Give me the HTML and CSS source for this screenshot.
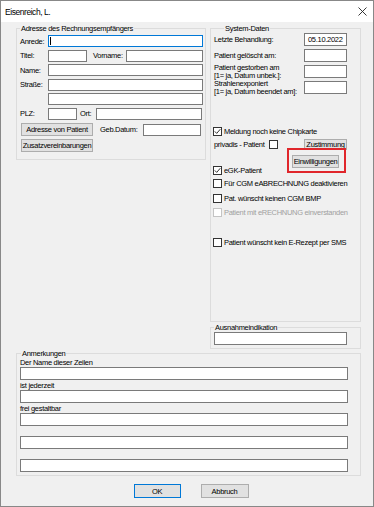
FILE: index.html
```html
<!DOCTYPE html>
<html lang="de">
<head>
  <meta charset="UTF-8" />
  <title>Eisenreich, L.</title>
  <link rel="stylesheet" href="styles.css">
</head>
<body>
<div class="window">
  <div class="titlebar">
    <span class="title">Eisenreich, L.</span>
    <svg class="close" width="9" height="9" viewBox="0 0 9 9"><path d="M0.5 0.5 L8.5 8.5 M8.5 0.5 L0.5 8.5" stroke="#222" stroke-width="0.9" fill="none"/></svg>
  </div>

  <div class="client">
    <div class="top">
      <fieldset class="group addr">
        <legend>Adresse des Rechnungsempfängers</legend>
        <div class="addr-rows">
          <div class="row"><span class="lbl">Anrede:</span><div class="edit focus"><span class="caret"></span></div></div>
          <div class="row"><span class="lbl">Titel:</span><div class="edit titel"></div><span class="lbl vorname">Vorname:</span><div class="edit"></div></div>
          <div class="row"><span class="lbl">Name:</span><div class="edit"></div></div>
          <div class="row"><span class="lbl">Straße:</span><div class="edit"></div></div>
          <div class="row"><span class="lbl"></span><div class="edit"></div></div>
          <div class="row"><span class="lbl">PLZ:</span><div class="edit plz"></div><span class="lbl ort">Ort:</span><div class="edit ort-edit"></div></div>
          <div class="row btn-row"><button class="btn wide">Adresse von Patient</button><span class="lbl geb">Geb.Datum:</span><div class="edit geb-edit"></div></div>
          <div class="row btn-row"><button class="btn wide">Zusatzvereinbarungen</button></div>
        </div>
      </fieldset>

      <div class="rightcol">
        <fieldset class="group sys">
          <legend>System-Daten</legend>
          <div class="sys-grid">
            <span class="lbl">Letzte Behandlung:</span><div class="edit value">05.10.2022</div>
            <span class="lbl">Patient gelöscht am:</span><div class="edit"></div>
            <span class="lbl">Patient gestorben am<br>[1= ja, Datum unbek.]:</span><div class="edit"></div>
            <span class="lbl">Strahlenexponiert<br>[1= ja, Datum beendet am]:</span><div class="edit"></div>
          </div>

          <div class="check meldung"><span class="box checked"><svg width="7" height="7" viewBox="0 0 7 7"><path d="M0.8 3.4 L2.7 5.4 L6.3 1.2" stroke="#333" stroke-width="1" fill="none"/></svg></span>Meldung noch keine Chipkarte</div>

          <div class="privadis">
            <span class="privadis-text">privadis - Patient</span>
            <span class="box"></span>
            <button class="btn small">Zustimmung</button>
          </div>

          <div class="egk-row">
            <div class="check"><span class="box checked"><svg width="7" height="7" viewBox="0 0 7 7"><path d="M0.8 3.4 L2.7 5.4 L6.3 1.2" stroke="#333" stroke-width="1" fill="none"/></svg></span>eGK-Patient</div>
            <div class="highlight"><button class="btn small">Einwilligungen</button></div>
          </div>

          <div class="check cgm">
            <span class="box"></span>Für CGM eABRECHNUNG deaktivieren
          </div>
          <div class="check bmp">
            <span class="box"></span>Pat. wünscht keinen CGM BMP
          </div>
          <div class="check disabled erechnung">
            <span class="box"></span>Patient mit eRECHNUNG einverstanden
          </div>
          <div class="check sms">
            <span class="box"></span>Patient wünscht kein E-Rezept per SMS
          </div>
        </fieldset>

        <fieldset class="group ausnahme">
          <legend>Ausnahmeindikation</legend>
          <div class="edit"></div>
        </fieldset>
      </div>
    </div>

    <fieldset class="group notes">
      <legend>Anmerkungen</legend>
      <div class="note"><span class="note-lbl">Der Name dieser Zeilen</span><div class="edit"></div></div>
      <div class="note"><span class="note-lbl">ist jederzeit</span><div class="edit"></div></div>
      <div class="note"><span class="note-lbl">frei gestaltbar</span><div class="edit"></div></div>
      <div class="note"><span class="note-lbl"></span><div class="edit"></div></div>
      <div class="note"><span class="note-lbl"></span><div class="edit"></div></div>
    </fieldset>

    <div class="buttons">
      <button class="btn dlg default">OK</button>
      <button class="btn dlg">Abbruch</button>
    </div>
  </div>
</div>
</body>
</html>
```

FILE: styles.css
```css
* {
  box-sizing: border-box;
}

body {
  margin: 0;
  font-family: "Liberation Sans", Arial, sans-serif;
  font-size: 7.5px;
  letter-spacing: -0.3px;
  color: #000;
}

.window {
  width: 374px;
  height: 507px;
  border: 1px solid #888;
  background: #f0f0f0;
}

.titlebar {
  height: 21px;
  background: #fff;
  display: flex;
  align-items: center;
  justify-content: space-between;
  padding: 0 6px 0 4px;
}

.title {
  font-size: 8.5px;
  letter-spacing: -0.45px;
}

.client {
  padding: 2px 12px 0 15px;
}

.top {
  display: flex;
  gap: 4px;
  align-items: flex-start;
}

/* group boxes */
fieldset.group {
  margin: 0;
  min-width: 0;
  border: 1px solid #dcdcdc;
}

fieldset.group legend {
  padding: 0 1px;
  line-height: 9px;
}

.addr {
  width: 190px;
  padding: 2px 2px 7px 3px;
}

.addr-rows {
  display: flex;
  flex-direction: column;
  gap: 2.5px;
}

.row {
  display: flex;
  align-items: center;
  height: 12px;
}

.lbl {
  flex: none;
  width: 28px;
  white-space: nowrap;
}

.edit {
  flex: 1;
  height: 12px;
  border: 1px solid #7a7a7a;
  background: #fff;
  display: flex;
  align-items: center;
}

.edit.focus {
  border-color: #0078d7;
}

.caret {
  width: 1px;
  height: 8px;
  margin-left: 1px;
  background: #000;
}

.edit.titel {
  flex: none;
  width: 39px;
}

.lbl.vorname {
  width: 33px;
  margin-left: 6px;
}

.edit.plz {
  flex: none;
  width: 29px;
}

.lbl.ort {
  width: 16px;
  margin-left: 3px;
}

.edit.ort-edit {
  margin-right: 1px;
}

.btn-row {
  height: 13px;
}

.addr-rows .btn-row:nth-child(7) {
  margin-top: 1px;
}

.lbl.geb {
  width: 43px;
  margin-left: 7px;
}

.edit.geb-edit {
  flex: none;
  width: 58px;
}

/* buttons */
.btn {
  font: inherit;
  letter-spacing: inherit;
  color: #000;
  background: #e1e1e1;
  border: 1px solid #adadad;
  border-radius: 0;
  padding: 0;
  margin: 0;
  white-space: nowrap;
}

.btn.wide {
  width: 72px;
  height: 13px;
  margin-left: 1px;
}

.btn.small {
  width: 43px;
  height: 11px;
  line-height: 9px;
}

/* right column */
.rightcol {
  width: 151px;
  display: flex;
  flex-direction: column;
  gap: 1px;
}

.sys {
  height: 298px;
  padding: 0 13px 0 3px;
}

.sys legend {
  margin-left: 10px;
}

.sys-grid {
  display: grid;
  grid-template-columns: 90px 43px;
  grid-auto-rows: 13px;
  row-gap: 3px;
  align-items: center;
}

.sys-grid .lbl {
  width: auto;
  line-height: 7.5px;
}

.sys-grid .edit {
  height: 13px;
}

.edit.value {
  padding-left: 3px;
}

.check {
  display: flex;
  align-items: center;
  height: 9px;
  margin-left: -1px;
  white-space: nowrap;
}

.box {
  flex: none;
  width: 9px;
  height: 9px;
  border: 1px solid #333;
  background: #fff;
  display: flex;
  align-items: center;
  justify-content: center;
  margin-right: 2px;
}

.check.disabled {
  color: #a0a0a0;
}

.check.disabled .box {
  border-color: #c4c4c4;
}

.meldung {
  margin-top: 33px;
}

.privadis {
  display: flex;
  align-items: center;
  height: 11px;
  margin-top: 3px;
}

.privadis-text {
  width: 55px;
}

.privadis .btn {
  margin-left: auto;
}

.egk-row {
  display: flex;
  align-items: flex-end;
  margin-top: -2px;
}

.highlight {
  margin-left: auto;
  margin-right: 1px;
  margin-bottom: 2px;
  border: 2px solid #e0262b;
  padding: 5px 5px 3px 3px;
}

.highlight .btn {
  width: 47px;
  height: 13px;
}

.cgm {
  margin-top: 4px;
}

.bmp {
  margin-top: 6px;
}

.erechnung {
  margin-top: 5px;
}

.sms {
  margin-top: 21px;
}

.ausnahme {
  padding: 0 13px 3px 3px;
}

.ausnahme .edit {
  height: 13px;
}

/* notes */
.notes {
  margin-top: 2px;
  padding: 0 12px 3px 3px;
}

.notes legend {
  margin-left: 1px;
}

.note {
  display: flex;
  flex-direction: column;
  margin-bottom: 1px;
}

.note:last-child {
  margin-bottom: 0;
}

.note-lbl {
  height: 9px;
  line-height: 9px;
}

.note .edit {
  flex: none;
  height: 13px;
}

/* dialog buttons */
.buttons {
  display: flex;
  justify-content: center;
  gap: 20px;
  margin-top: 8px;
  padding-left: 5px;
}

.btn.dlg {
  width: 48px;
  height: 14px;
}

.btn.default {
  width: 47px;
  border-color: #0078d7;
}
```
